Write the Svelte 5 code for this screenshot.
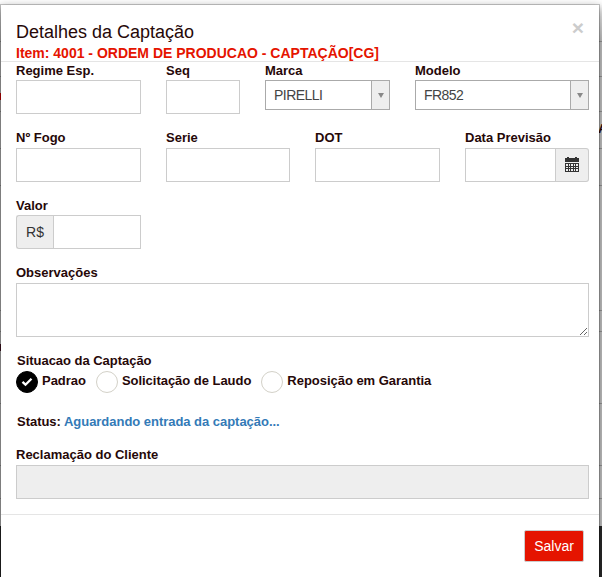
<script lang="ts">
  const SITUACOES = ['Padrao', 'Solicitação de Laudo', 'Reposição em Garantia'];

  let regime = $state('');
  let seq = $state('');
  let fogo = $state('');
  let serie = $state('');
  let dot = $state('');
  let previsao = $state('');
  let valor = $state('');
  let observacoes = $state('');
  let situacao = $state('Padrao');

  // row separators of the listing behind the dialog
  const ROWS = [41, 76, 111, 148, 185, 310, 331, 403, 465, 498];
</script>

<div class="page">
  <div class="backdrop">
    {#each ROWS as y}<i class="rule" style="top: {y}px"></i>{/each}
    <i class="mark red"></i>
    <i class="mark dark"></i>
    <span class="peek">A</span>
  </div>

  <div class="modal">
    <header>
      <div>
        <h4>Detalhes da Captação</h4>
        <div class="item">Item: 4001 - ORDEM DE PRODUCAO - CAPTAÇÃO[CG]</div>
      </div>
      <button class="close" aria-label="Fechar">×</button>
    </header>

    <div class="body">
      <div class="row first">
        <label class="field">Regime Esp.<input bind:value={regime} /></label>
        <label class="field">Seq<input bind:value={seq} /></label>
        <div class="field">
          Marca
          <div class="select"><span>PIRELLI</span><b><i class="caret"></i></b></div>
        </div>
        <div class="field">
          Modelo
          <div class="select"><span>FR852</span><b><i class="caret"></i></b></div>
        </div>
      </div>

      <div class="row second">
        <label class="field">Nº Fogo<input bind:value={fogo} /></label>
        <label class="field">Serie<input bind:value={serie} /></label>
        <label class="field">DOT<input bind:value={dot} /></label>
        <label class="field">
          Data Previsão
          <span class="group">
            <input bind:value={previsao} />
            <span class="addon right">
              <svg width="14" height="15" viewBox="0 0 14 15" shape-rendering="crispEdges">
                <path fill="#333" d="M2 0h2v1h6V0h2v1h2v4H0V1h2z" />
                <path fill="#333" d="M0 6h14v9H0z" />
                <path fill="#eee" d="M1 7h2v2H1zM4 7h1v2H4zM6 7h2v2H6zM9 7h1v2H9zM11 7h2v2h-2zM1 10h2v1H1zM4 10h1v1H4zM6 10h2v1H6zM9 10h1v1H9zM11 10h2v1h-2zM1 12h2v2H1zM4 12h1v2H4zM6 12h2v2H6zM9 12h1v2H9zM11 12h2v2h-2z" />
              </svg>
            </span>
          </span>
        </label>
      </div>

      <div class="row third">
        <label class="field">
          Valor
          <span class="group">
            <span class="addon left">R$</span>
            <input bind:value={valor} />
          </span>
        </label>
      </div>

      <label class="field obs">Observações<textarea bind:value={observacoes}></textarea></label>

      <div class="situacao">
        <div class="legend">Situacao da Captação</div>
        <div class="options">
          {#each SITUACOES as s}
            <button class="option" onclick={() => (situacao = s)}>
              <span class="radio" class:checked={situacao === s}>
                {#if situacao === s}
                  <svg width="12" height="10" viewBox="0 0 12 10">
                    <path d="M1.5 4.8l3 2.9 6-6" fill="none" stroke="#fff" stroke-width="2.3" />
                  </svg>
                {/if}
              </span>
              <span class="name">{s}</span>
            </button>
          {/each}
        </div>
      </div>

      <div class="status">Status: <span>Aguardando entrada da captação...</span></div>

      <label class="field reclamacao">Reclamação do Cliente<input disabled /></label>
    </div>

    <footer><button class="save">Salvar</button></footer>
  </div>
</div>

<style>
  :global(body) { overflow: hidden; }
  .page {
    position: relative;
    box-sizing: border-box;
    height: 577px;
    padding: 4px 2px 0 0;
    overflow: hidden;
    background: linear-gradient(#fff 0, #fff 4px, #c8c8c8 40px, #c8c8c8 526px, #2a2a2a 526px);
    font-family: "Liberation Sans", Arial, sans-serif;
    font-size: 13px;
    line-height: 18px;
    color: #260808;
  }
  .page * { box-sizing: border-box; }
  .backdrop { position: absolute; inset: 0; }
  .rule { position: absolute; left: 0; right: 0; height: 1px; background: #999; }
  .mark { position: absolute; left: 0; width: 1px; height: 7px; }
  .mark.red { top: 93px; background: #d00; }
  .mark.dark { top: 344px; background: #412; }
  .peek { position: absolute; left: 598px; top: 120px; font-weight: bold; }

  .modal {
    position: relative;
    height: 600px;
    background: #fff;
    background-clip: padding-box;
    border: 1px solid rgba(0, 0, 0, 0.2);
    box-shadow: 0 3px 9px rgba(0, 0, 0, 0.4);
  }
  header {
    display: flex;
    justify-content: space-between;
    height: 57px;
    padding: 16px 15px 0;
    border-bottom: 1px solid #e5e5e5;
  }
  h4 { margin: 0; font-size: 18px; line-height: 22px; font-weight: normal; }
  .item { font-size: 14px; line-height: 20px; font-weight: bold; color: #e51400; white-space: nowrap; }
  .close {
    height: 20px;
    padding: 0;
    margin: -3px 0 0;
    border: 0;
    background: none;
    font: bold 21px/20px "Liberation Sans", Arial, sans-serif;
    color: #ccc;
  }

  .body { height: 452px; padding: 0 10px 0 15px; font-weight: bold; }
  .row { display: grid; column-gap: 25px; }
  .first { grid-template-columns: 125px 74px 125px 174px; height: 67px; }
  .second { grid-template-columns: 125px 124px 125px 124px; height: 68px; }
  .third { grid-template-columns: 125px; height: 67px; }
  .field { display: block; }
  input, textarea {
    display: block;
    width: 100%;
    height: 34px;
    margin: 0;
    padding: 6px 12px;
    border: 1px solid #ccc;
    border-radius: 0;
    background: #fff;
    outline: none;
  }
  .second input, .second .addon, .reclamacao input { margin-top: 1px; }
  input:disabled { background: #eee; }
  textarea { height: 54px; margin-top: 1px; }
  .select {
    display: flex;
    justify-content: space-between;
    height: 30px;
    border: 1px solid #aaa;
    background: #fff;
    font-size: 14px;
    font-weight: normal;
    letter-spacing: -0.55px;
    line-height: 29px;
    color: #444;
  }
  .select span { padding-left: 8px; }
  .select b {
    display: flex;
    align-items: center;
    justify-content: center;
    width: 18px;
    border-left: 1px solid #aaa;
    background: #eee;
  }
  .caret { border: 3px solid transparent; border-top: 5px solid #888; border-bottom: 0; }
  .group { display: flex; }
  .group input { flex: 1; min-width: 0; }
  .addon {
    display: flex;
    align-items: center;
    justify-content: center;
    height: 34px;
    border: 1px solid #ccc;
    background: #eee;
    font-size: 14px;
    font-weight: normal;
    color: #333;
  }
  .left { width: 37px; border-right: 0; border-radius: 3px 0 0 3px; }
  .right { width: 33px; padding-bottom: 2px; border-left: 0; border-radius: 0 3px 3px 0; }

  .obs { height: 87px; }
  .situacao { height: 62px; }
  .legend { padding-left: 1px; line-height: 20px; letter-spacing: -0.03px; }
  .options { display: flex; gap: 10px; }
  .option {
    display: flex;
    gap: 4px;
    padding: 0;
    border: 0;
    background: none;
    font: inherit;
    color: inherit;
  }
  .name { padding-top: 1px; letter-spacing: -0.03px; }
  .radio {
    display: flex;
    align-items: center;
    justify-content: center;
    width: 22px;
    height: 22px;
    border: 1px solid #d3d1c8;
    border-radius: 50%;
  }
  .radio.checked { border-color: #000; background: #000; }
  .status { height: 33px; padding-left: 1px; letter-spacing: -0.03px; }
  .status span { color: #337ab7; }

  footer {
    display: flex;
    justify-content: flex-end;
    align-items: flex-start;
    padding: 15px 15px 0;
    border-top: 1px solid #e5e5e5;
  }
  .save {
    width: 60px;
    height: 32px;
    padding: 0;
    border: 1px solid #ccc;
    border-radius: 2px;
    background: #e51400;
    font: 14px "Liberation Sans", Arial, sans-serif;
    color: #fff;
  }
</style>
